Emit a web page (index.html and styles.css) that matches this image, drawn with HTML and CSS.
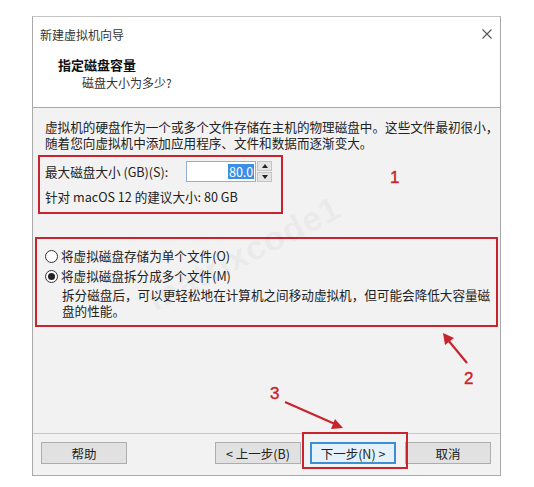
FILE: index.html
```html
<!DOCTYPE html>
<html lang="zh-CN">
<head>
    <meta charset="UTF-8">
    <meta name="viewport" content="width=device-width, initial-scale=1.0">
    <title>新建虚拟机向导</title>
    <link rel="stylesheet" href="styles.css">
</head>
<body>
    <div class="window">
        <div class="top">
            <div class="titlebar">
                <span class="title">新建虚拟机向导</span>
                <svg class="close" width="10" height="10" viewBox="0 0 10 10">
                    <path d="M0.5 0.5 L9.5 9.5 M9.5 0.5 L0.5 9.5" stroke="#555" stroke-width="1.1" fill="none"/>
                </svg>
            </div>
            <div class="heading">指定磁盘容量</div>
            <div class="subheading">磁盘大小为多少?</div>
        </div>

        <div class="content">
            <p class="intro">虚拟机的硬盘作为一个或多个文件存储在主机的物理磁盘中。这些文件最初很小，<br>随着您向虚拟机中添加应用程序、文件和数据而逐渐变大。</p>

            <div class="mark size-box">
                <div class="size-row">
                    <span>最大磁盘大小 (GB)(S):</span>
                    <div class="spin">
                        <div class="spin-input"><span class="sel">80.0</span></div>
                        <div class="spin-btns">
                            <span class="spin-btn"><i class="tri up"></i></span>
                            <span class="spin-btn"><i class="tri down"></i></span>
                        </div>
                    </div>
                </div>
                <div class="hint">针对 macOS 12 的建议大小: 80 GB</div>
            </div>

            <div class="mark split-box">
                <label class="radio"><span class="dot"></span>将虚拟磁盘存储为单个文件(O)</label>
                <label class="radio"><span class="dot on"></span>将虚拟磁盘拆分成多个文件(M)</label>
                <p class="desc">拆分磁盘后，可以更轻松地在计算机之间移动虚拟机，但可能会降低大容量磁<br>盘的性能。</p>
            </div>
        </div>

        <div class="footer">
            <button class="btn">帮助</button>
            <div class="nav">
                <button class="btn">&lt; 上一步(B)</button>
                <button class="btn primary">下一步(N) &gt;</button>
                <button class="btn">取消</button>
            </div>
        </div>
    </div>

    <!-- annotations drawn over the screenshot -->
    <span class="watermark">matrixcode1</span>
    <span class="num num1">1</span>
    <span class="num num2">2</span>
    <span class="num num3">3</span>
    <div class="next-mark"></div>
    <svg class="arrows" width="534" height="487" viewBox="0 0 534 487">
        <line x1="467" y1="363" x2="448" y2="340" stroke="#c8242e" stroke-width="2.2"/>
        <polygon points="443,333 454,338 445,345" fill="#c8242e"/>
        <line x1="285" y1="402" x2="335" y2="424" stroke="#c8242e" stroke-width="2.2"/>
        <polygon points="343,428 331,429 335,419" fill="#c8242e"/>
    </svg>
</body>
</html>
```

FILE: styles.css
```css
* {
    margin: 0;
    padding: 0;
    box-sizing: border-box;
}

body {
    width: 534px;
    height: 487px;
    background-color: white;
    font-family: "Noto Sans CJK SC", "Liberation Sans", sans-serif;
    color: #222;
    position: relative;
    overflow: hidden;
}

.window {
    margin: 16px 0 0 32px;
    width: 469px;
    height: 460px;
    border: 1px solid #a9a9a9;
    border-top-color: #c4c4c4;
    display: flex;
    flex-direction: column;
    background-color: #f2f2f2;
}

/* white header part */
.top {
    background-color: white;
    border-bottom: 1px solid #a8a8a8;
    padding: 9px 8px 16px 7px;
}

.titlebar {
    display: flex;
    justify-content: space-between;
    align-items: center;
    height: 16px;
    font-size: 12px;
    color: #333;
}

.heading {
    margin: 15px 0 0 18px;
    font-size: 13px;
    font-weight: bold;
    line-height: 16px;
    color: #111;
}

.subheading {
    margin: 2px 0 0 42px;
    font-size: 12px;
    line-height: 16px;
    color: #333;
}

/* body */
.content {
    flex: 1;
    padding-top: 11px;
    font-size: 12.6px;
    line-height: 16px;
}

.intro {
    padding-left: 12px;
    white-space: nowrap;
}

.mark {
    border: 2px solid #c8242e;
}

.size-box {
    margin: 4px 0 0 5px;
    width: 245px;
    padding: 4px 0 7px 5px;
}

.size-row {
    display: flex;
    align-items: center;
    gap: 18px;
}

.spin {
    display: flex;
    align-items: center;
    gap: 1px;
}

.spin-input {
    width: 70px;
    height: 21px;
    background-color: white;
    border: 1px solid #8fb1d6;
    display: flex;
    align-items: center;
    justify-content: flex-end;
    padding-right: 1px;
}

.sel {
    background-color: #3a8ee6;
    color: white;
    line-height: 15px;
    padding: 0 1px;
}

.spin-btns {
    display: flex;
    flex-direction: column;
    gap: 1px;
}

.spin-btn {
    width: 15px;
    height: 10px;
    background-color: #e4e4e4;
    border: 1px solid #c4c4c4;
    display: flex;
    align-items: center;
    justify-content: center;
}

.tri {
    width: 0;
    height: 0;
    border-left: 3px solid transparent;
    border-right: 3px solid transparent;
}

.tri.up {
    border-bottom: 4px solid #222;
}

.tri.down {
    border-top: 4px solid #222;
}

.hint {
    margin-top: 7px;
}

.split-box {
    margin: 23px 0 0 2px;
    width: 463px;
    padding: 9px 0 6px 8px;
}

.radio {
    display: flex;
    align-items: center;
    gap: 3px;
    line-height: 16px;
}

.radio + .radio {
    margin-top: 4px;
}

.dot {
    width: 13px;
    height: 13px;
    border: 1px solid #333;
    border-radius: 50%;
    background-color: white;
    display: flex;
    align-items: center;
    justify-content: center;
}

.dot.on::after {
    content: "";
    width: 7px;
    height: 7px;
    border-radius: 50%;
    background-color: #222;
}

.desc {
    margin-top: 3px;
    padding-left: 17px;
    white-space: nowrap;
}

/* buttons */
.footer {
    border-top: 1px solid #c6c6c6;
    height: 42px;
    display: flex;
    justify-content: space-between;
    align-items: flex-start;
    padding: 8px 9px 0 8px;
}

.nav {
    display: flex;
    gap: 9px;
}

.btn {
    width: 86px;
    height: 22px;
    background-color: #e1e1e1;
    border: 1px solid #adadad;
    font-family: "Noto Sans CJK SC", "Liberation Sans", sans-serif;
    font-size: 12.5px;
    color: #222;
}

.btn.primary {
    background-color: #e5f1fb;
    border: 2px solid #3c8fd4;
}

/* overlays */
.watermark {
    position: absolute;
    left: 150px;
    top: 282px;
    font-family: "Liberation Sans", sans-serif;
    font-size: 34px;
    font-weight: bold;
    color: rgba(0, 0, 0, 0.05);
    transform: rotate(-27deg);
    transform-origin: left center;
    letter-spacing: 1px;
}

.num {
    position: absolute;
    font-family: "Liberation Sans", sans-serif;
    font-size: 17px;
    color: #c8242e;
    line-height: 1;
    -webkit-text-stroke: 0.4px #c8242e;
}

.num1 { left: 390px; top: 169px; }
.num2 { left: 464px; top: 370px; }
.num3 { left: 270px; top: 385px; }

.next-mark {
    position: absolute;
    left: 302px;
    top: 432px;
    width: 106px;
    height: 37px;
    border: 2px solid #c8242e;
}

.arrows {
    position: absolute;
    left: 0;
    top: 0;
    pointer-events: none;
}
```
